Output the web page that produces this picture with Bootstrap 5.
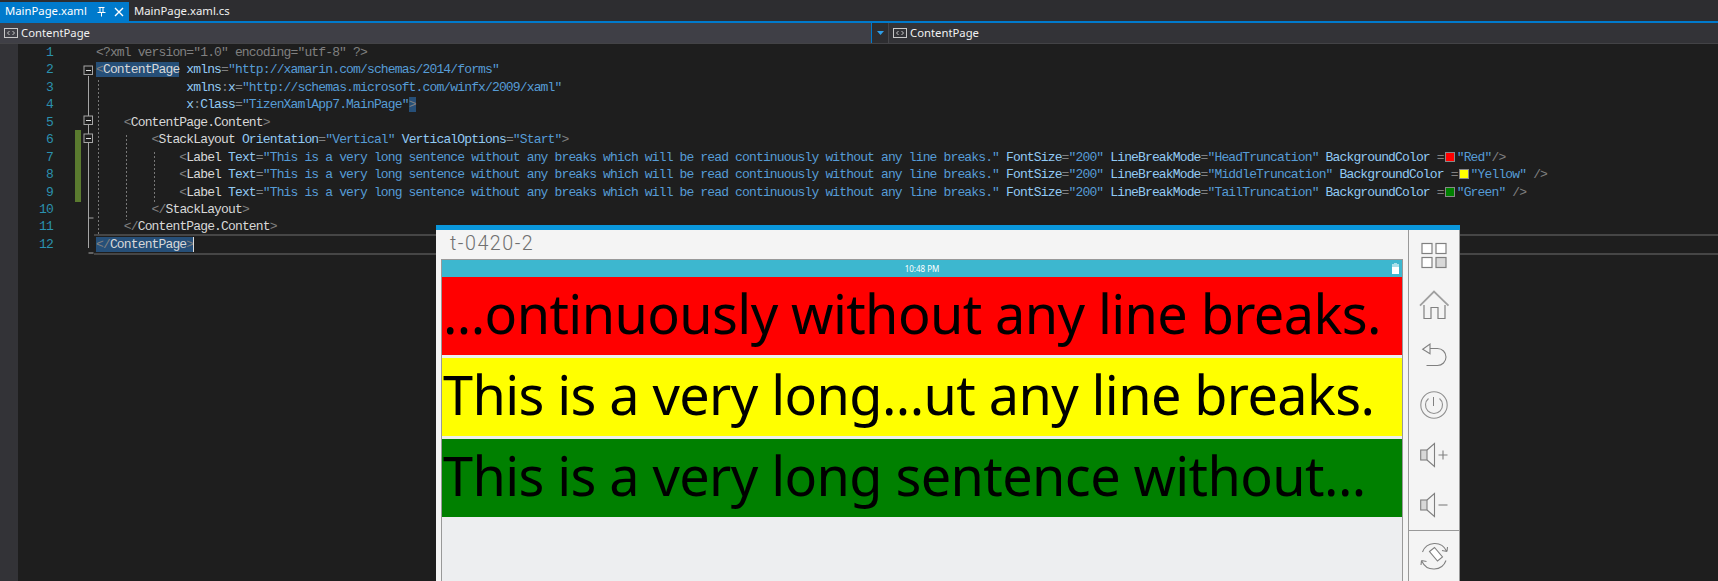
<!DOCTYPE html>
<html lang="en"><head><meta charset="utf-8"><title>MainPage.xaml</title>
<link href="https://cdn.jsdelivr.net/npm/bootstrap@5.3.0/dist/css/bootstrap.min.css" rel="stylesheet">
<style>
html,body{height:581px;overflow:hidden;background:#1e1e1e}
body{position:relative;font-family:"Noto Sans",sans-serif}
.tabstrip{height:23px;background:#2d2d30;border-bottom:2px solid #007acc;font-size:11.3px;color:#f1f1f1}
.tabx{height:19px;padding:0 0 0 5px;width:129px;margin-top:2px}
.tabx.on{background:#007acc;color:#fff}
.tabx.off{padding-left:5px;width:auto}
.navpane{height:21px;font-size:11.3px;color:#f1f1f1;border-bottom:1px solid #434346}
.navleft{width:871px;background:#3f3f46;padding-left:4px;gap:3px}
.navdrop{width:17px;background:#2d2d30;border-left:1px solid #007acc}
.navright{flex:1;background:#333337;padding-left:4px;gap:3px;margin-left:0;border-left:1px solid #46464a}
.railx{width:18px;height:537px;background:#333337}
.nums{width:35px;color:#2b91af;text-align:right}
.linex{height:17.45px;line-height:17.45px;white-space:pre}
.codewrap{font-family:"Liberation Mono",monospace;font-size:13px;letter-spacing:-.855px}
.codecol{margin-left:43px;flex:1;min-width:0;position:relative}
.cd{color:#808080}.cn{color:#d8d8d8}.ca{color:#92caf4}.cv{color:#569cd6}
.hl{background:#264f78}
.lnow{box-shadow:0 -2px 0 #464646,0 2px 0 #464646;margin-left:-2px;padding-left:2px;width:1624px}
.caretx{border-left:1px solid #dcdcdc;margin-left:0}
.swat{display:inline-block;width:10px;height:10px;border:1px solid #888;vertical-align:-1px;margin:0 2px 0 1px}
.ovl{position:absolute;left:0;top:0;pointer-events:none}
.emu{position:absolute;left:436px;top:225px;width:1024px;height:356px;background:#f4f4f4;border-top:5px solid #0a97dc;overflow:hidden}
.emumain{width:972px;padding:0 5px}
.emutitle{height:29px;font-family:Roboto,sans-serif;font-weight:300;font-size:19.7px;letter-spacing:1.5px;color:#707070;padding-left:9px;line-height:27px}
.scr{width:962px;flex:1;border:solid #999;border-width:1px 1px 0 1px;background:#edeef0;margin-right:0}
.statusx{height:17px;background:#3db7cf;color:#fff;font-size:8px;line-height:17px;position:relative}
.batt{position:absolute;right:3px;top:3px}
.barx{height:78px;font-size:54px;letter-spacing:-.6px;line-height:72px;color:#000;white-space:nowrap;padding-left:1px}
.b1{background:#f00}.b2{background:#ff0;margin-top:3px}.b3{background:#008000;margin-top:3px}
.sidep{width:52px;border-left:1px solid #999;border-right:1px solid #999}
.sidebtn{height:50px}
.sidediv{border-top:1px solid #999}
svg{display:block}
</style></head>
<body>
<div class="tabstrip d-flex">
  <div class="tabx on d-flex align-items-center"><span>MainPage.xaml</span>
    <svg class="ms-auto" width="32" height="14" viewBox="0 0 32 14" fill="none" stroke="#fff"><path d="M1.5 2.5h6M3 2.5v5h3v-5M0.5 7.5h8M4.5 7.5v4" stroke-width="1"/><path d="M18 3l8 8M26 3l-8 8" stroke-width="1.4"/></svg>
  </div>
  <div class="tabx off d-flex align-items-center">MainPage.xaml.cs</div>
</div>
<div class="navpane d-flex">
  <div class="navleft d-flex align-items-center">
    <svg width="14" height="10" viewBox="0 0 14 10" fill="none" stroke="#c8c8c8"><rect x=".5" y=".5" width="13" height="9"/><path d="M5.5 3l-2 2 2 2M8.5 3l2 2-2 2"/></svg><span>ContentPage</span></div>
  <div class="navdrop d-flex align-items-center justify-content-center"><svg width="7" height="4" viewBox="0 0 7 4"><path d="M0 0h7L3.5 4z" fill="#2f9fe8"/></svg></div>
  <div class="navright d-flex align-items-center">
    <svg width="14" height="10" viewBox="0 0 14 10" fill="none" stroke="#c8c8c8"><rect x=".5" y=".5" width="13" height="9"/><path d="M5.5 3l-2 2 2 2M8.5 3l2 2-2 2"/></svg><span>ContentPage</span></div>
</div>
<div class="d-flex codewrap">
  <div class="railx flex-shrink-0"></div>
  <div class="nums flex-shrink-0">
    <div class="linex">1</div><div class="linex">2</div><div class="linex">3</div><div class="linex">4</div><div class="linex">5</div><div class="linex">6</div><div class="linex">7</div><div class="linex">8</div><div class="linex">9</div><div class="linex">10</div><div class="linex">11</div><div class="linex">12</div>
  </div>
  <div class="codecol">
<div class="linex cd">&lt;?xml version="1.0" encoding="utf-8" ?&gt;</div>
<div class="linex"><span class="hl"><span class="cd">&lt;</span><span class="cn">ContentPage</span></span> <span class="ca">xmlns</span><span class="cd">=</span><span class="cv">"http://xamarin.com/schemas/2014/forms"</span></div>
<div class="linex">             <span class="ca">xmlns</span><span class="cd">:</span><span class="ca">x</span><span class="cd">=</span><span class="cv">"http://schemas.microsoft.com/winfx/2009/xaml"</span></div>
<div class="linex">             <span class="ca">x</span><span class="cd">:</span><span class="ca">Class</span><span class="cd">=</span><span class="cv">"TizenXamlApp7.MainPage"</span><span class="cd hl">&gt;</span></div>
<div class="linex">    <span class="cd">&lt;</span><span class="cn">ContentPage.Content</span><span class="cd">&gt;</span></div>
<div class="linex">        <span class="cd">&lt;</span><span class="cn">StackLayout</span> <span class="ca">Orientation</span><span class="cd">=</span><span class="cv">"Vertical"</span> <span class="ca">VerticalOptions</span><span class="cd">=</span><span class="cv">"Start"</span><span class="cd">&gt;</span></div>
<div class="linex">            <span class="cd">&lt;</span><span class="cn">Label</span> <span class="ca">Text</span><span class="cd">=</span><span class="cv">"This is a very long sentence without any breaks which will be read continuously without any line breaks."</span> <span class="ca">FontSize</span><span class="cd">=</span><span class="cv">"200"</span> <span class="ca">LineBreakMode</span><span class="cd">=</span><span class="cv">"HeadTruncation"</span> <span class="ca">BackgroundColor</span> <span class="cd">=</span><span class="swat b1"></span><span class="cv">"Red"</span><span class="cd">/&gt;</span></div>
<div class="linex">            <span class="cd">&lt;</span><span class="cn">Label</span> <span class="ca">Text</span><span class="cd">=</span><span class="cv">"This is a very long sentence without any breaks which will be read continuously without any line breaks."</span> <span class="ca">FontSize</span><span class="cd">=</span><span class="cv">"200"</span> <span class="ca">LineBreakMode</span><span class="cd">=</span><span class="cv">"MiddleTruncation"</span> <span class="ca">BackgroundColor</span> <span class="cd">=</span><span class="swat" style="background:#ff0"></span><span class="cv">"Yellow"</span> <span class="cd">/&gt;</span></div>
<div class="linex">            <span class="cd">&lt;</span><span class="cn">Label</span> <span class="ca">Text</span><span class="cd">=</span><span class="cv">"This is a very long sentence without any breaks which will be read continuously without any line breaks."</span> <span class="ca">FontSize</span><span class="cd">=</span><span class="cv">"200"</span> <span class="ca">LineBreakMode</span><span class="cd">=</span><span class="cv">"TailTruncation"</span> <span class="ca">BackgroundColor</span> <span class="cd">=</span><span class="swat" style="background:#008000"></span><span class="cv">"Green"</span> <span class="cd">/&gt;</span></div>
<div class="linex">        <span class="cd">&lt;/</span><span class="cn">StackLayout</span><span class="cd">&gt;</span></div>
<div class="linex">    <span class="cd">&lt;/</span><span class="cn">ContentPage.Content</span><span class="cd">&gt;</span></div>
<div class="linex lnow"><span class="hl"><span class="cd">&lt;/</span><span class="cn">ContentPage</span><span class="cd">&gt;</span></span><span class="caretx"></span></div>
  </div>
</div>
<svg class="ovl" width="440" height="270" fill="none">
  <rect x="75" y="130" width="6" height="72" fill="#5a7a2f"/>
  <path d="M88.5 76v172M88.5 218h5M88.5 253h5" stroke="#a5a5a5"/>
  <g fill="#1e1e1e" stroke="#a5a5a5"><rect x="84" y="66" width="8.5" height="8.5"/><rect x="84" y="116" width="8.5" height="8.5"/><rect x="84" y="134" width="8.5" height="8.5"/></g>
  <path d="M86 70.500h5M86 120.500h5M86 138.500h5" stroke="#ddd"/>
  <path d="M98.500 80v155M126.500 135v85M154.500 152v50" stroke="#777" stroke-dasharray="2 2"/>
</svg>
<div class="emu d-flex">
  <div class="emumain d-flex flex-column">
    <div class="emutitle">t-0420-2</div>
    <div class="scr">
      <div class="statusx text-center">10:48 PM
        <svg class="batt" width="7" height="11" viewBox="0 0 7 11"><path d="M2 0h3v1h2v10H0V1h2z" fill="#a8e0ea"/><rect y="4" width="7" height="7" fill="#fff"/></svg></div>
      <div class="barx b1">...ontinuously without any line breaks.</div>
      <div class="barx b2">This is a very long...ut any line breaks.</div>
      <div class="barx b3">This is a very long sentence without...</div>
    </div>
  </div>
  <div class="sidep">
    <div class="sidebtn"><svg width="50" height="50" viewBox="0 0 50 50" fill="#fff" stroke="#808080" stroke-width="1.2"><rect x="13" y="13.500" width="10" height="10"/><rect x="27" y="13.500" width="10" height="10"/><rect x="13" y="27.500" width="10" height="10"/><rect x="27" y="27.500" width="10" height="10" fill="#d8d8d8"/></svg></div>
    <div class="sidebtn"><svg width="50" height="50" viewBox="0 0 50 50" fill="none" stroke="#808080" stroke-width="1.200"><path d="M11 25.700 25 11.500l14.500 14.200" stroke="#a0a0a0" stroke-width="1.800"/><path d="M15 25v13.500h7v-11h7v11h7V25"/></svg></div>
    <div class="sidebtn"><svg width="50" height="50" viewBox="0 0 50 50" fill="none" stroke="#808080" stroke-width="1.100"><path d="M13.700 19.300 21 14v9.700zM21 18.500h7.500a8.500 8.500 0 0 1 0 17H17.500"/></svg></div>
    <div class="sidebtn"><svg width="50" height="50" viewBox="0 0 50 50" fill="none" stroke="#909090"><circle cx="25" cy="25" r="13.200" stroke-width="1.100"/><path d="M19.500 18.500a8.500 8.500 0 1 0 11 0" stroke-width="1.100"/><path d="M24.500 17v9" stroke="#808080"/></svg></div>
    <div class="sidebtn"><svg width="50" height="50" viewBox="0 0 50 50" fill="none" stroke="#808080" stroke-width="1.100"><rect x="11.700" y="20" width="6.300" height="10" fill="#d8d8d8"/><path d="M18 20l7.500-6.500v23L18 30"/><path d="M29.500 25h9M34 20.500v9"/></svg></div>
    <div class="sidebtn"><svg width="50" height="50" viewBox="0 0 50 50" fill="none" stroke="#808080" stroke-width="1.100"><rect x="11.700" y="20" width="6.300" height="10" fill="#d8d8d8"/><path d="M18 20l7.500-6.500v23L18 30"/><path d="M29.500 25h9"/></svg></div>
    <div class="sidediv sidebtn"><svg width="50" height="50" viewBox="0 0 50 50" fill="none" stroke="#808080" stroke-width="1.100"><path d="M20.500 20.500l5-4 8 9.500-5 4z" fill="#fff"/><path d="M13.500 21a13 13 0 0 1 24-1M38 20.500l-5-1M38 20.500l.5-4.500"/><path d="M37 29.500a13 13 0 0 1-24 1M12.500 29.500l5 1M12.500 29.500l-.5 4.500"/></svg></div>
  </div>
</div>
<script src="https://cdn.jsdelivr.net/npm/bootstrap@5.3.0/dist/js/bootstrap.bundle.min.js"></script>
</body></html>
